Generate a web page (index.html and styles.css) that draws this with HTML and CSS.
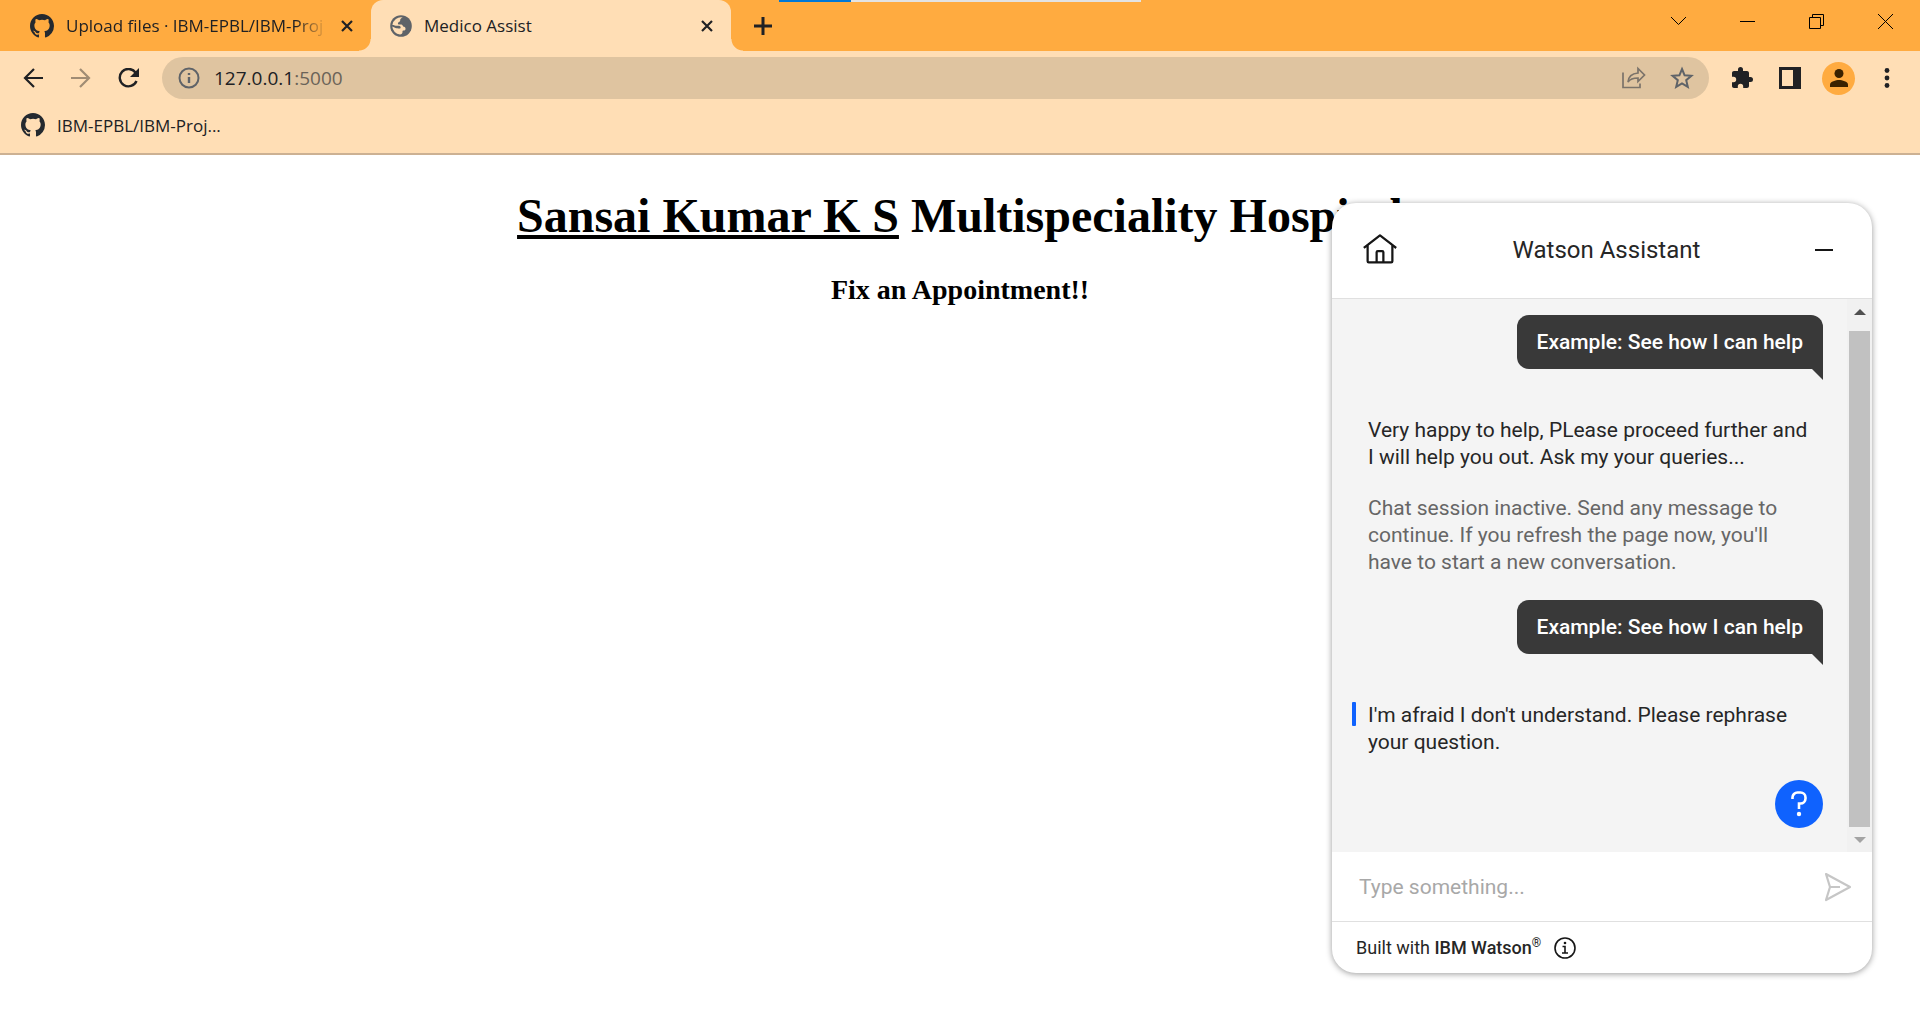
FILE: index.html
```html
<!DOCTYPE html>
<html lang="en">
<head>
<meta charset="utf-8">
<title>Medico Assist</title>
<link rel="stylesheet" href="styles.css">
</head>
<body>
<svg class="sprite" aria-hidden="true">
  <symbol id="github" viewBox="0 0 16 16"><path fill="#24292f" d="M8 0C3.58 0 0 3.58 0 8c0 3.54 2.29 6.53 5.47 7.59.4.07.55-.17.55-.38 0-.19-.01-.82-.01-1.49-2.01.37-2.53-.49-2.69-.94-.09-.23-.48-.94-.82-1.13-.28-.15-.68-.52-.01-.53.63-.01 1.08.58 1.23.82.72 1.21 1.87.87 2.33.66.07-.52.28-.87.51-1.07-1.78-.2-3.64-.89-3.64-3.95 0-.87.31-1.59.82-2.15-.08-.2-.36-1.02.08-2.12 0 0 .67-.21 2.2.82a7.6 7.6 0 0 1 4 0c1.53-1.04 2.2-.82 2.2-.82.44 1.1.16 1.92.08 2.12.51.56.82 1.27.82 2.15 0 3.07-1.87 3.75-3.65 3.95.29.25.54.73.54 1.48 0 1.07-.01 1.93-.01 2.2 0 .21.15.46.55.38A8.01 8.01 0 0 0 16 8c0-4.42-3.58-8-8-8z"/></symbol>
  <symbol id="cross" viewBox="0 0 12 12"><path d="M1 1l10 10M11 1L1 11" stroke="#202124" stroke-width="2.2" fill="none"/></symbol>
</svg>

<div class="window">
  <header class="browser">
    <div class="tabstrip">
      <div class="loading"><span></span></div>
      <div class="tab">
        <svg class="favicon" aria-hidden="true"><use href="#github"/></svg>
        <span class="tab-title tab-title-fade">Upload files · IBM-EPBL/IBM-Proj</span>
        <button class="close" aria-label="Close tab"><svg width="12" height="12"><use href="#cross"/></svg></button>
      </div>
      <div class="tab tab-active">
        <svg class="favicon globe" viewBox="0 0 22 22" aria-hidden="true"><circle cx="11" cy="11" r="10.800" fill="#5f6368"/><path fill="#ffdeb5" d="M12.800 2.400C11 3 10 4 10.200 5.500 10.400 7 8.500 6.800 8 8c-.4 1 .4 1.500 1.500 1.500h2c1.500.2 1 2.200 2.500 2.300 1 .1 1.500 1 1.500 2 0 1.500-.8 1.700-2.300 1.700-.8 0-.7 1-.7 1.800 0 1.200-1 2.200-2.500 2.200A8.600 8.600 0 0 1 2.300 11.500L5.500 13c1 .5 2.500.3 3.500.5 1.500.2 2-.8 1.500-1.800-.5-1.200-2-.9-3.500-.9-1.800 0-2.800-.8-4.600-.8A8.700 8.700 0 0 1 12.800 2.400z"/></svg>
        <span class="tab-title">Medico Assist</span>
        <button class="close" aria-label="Close tab"><svg width="12" height="12"><use href="#cross"/></svg></button>
      </div>
      <button class="newtab" aria-label="New tab"><svg width="18" height="18" viewBox="0 0 18 18"><path d="M9 0v18M0 9h18" stroke="#202124" stroke-width="3"/></svg></button>
      <div class="caption">
        <button aria-label="Search tabs"><svg width="15" height="15" viewBox="0 0 15 15"><path d="M0 3l7.500 7.500L15 3" fill="none" stroke="#000"/></svg></button>
        <button aria-label="Minimize"><svg width="15" height="15" viewBox="0 0 15 15"><path d="M0 7.500h15" stroke="#000"/></svg></button>
        <button aria-label="Restore"><svg width="15" height="15" viewBox="0 0 15 15"><path d="M.5 3.500h11v11H.5zM3.500 3.500v-3h11v11h-3" fill="none" stroke="#000"/></svg></button>
        <button aria-label="Close"><svg width="15" height="15" viewBox="0 0 15 15"><path d="M0 0l15 15M15 0L0 15" stroke="#000"/></svg></button>
      </div>
    </div>

    <div class="toolbar">
      <nav class="nav">
        <button aria-label="Back"><svg width="20" height="20" viewBox="0 0 20 20"><path d="M20 10H2M11 1l-9 9 9 9" fill="none" stroke="#202124" stroke-width="2.200"/></svg></button>
        <button aria-label="Forward"><svg width="20" height="20" viewBox="0 0 20 20"><path d="M0 10h18M9 1l9 9-9 9" fill="none" stroke="#a08c74" stroke-width="2.200"/></svg></button>
        <button aria-label="Reload"><svg width="22" height="20" viewBox="0 0 22 20"><path d="M17.500 4.500A8.700 8.700 0 1 0 18.500 13" fill="none" stroke="#202124" stroke-width="2.400"/><path d="M21 0v9h-9z" fill="#202124"/></svg></button>
      </nav>
      <div class="omnibox">
        <svg width="22" height="22" viewBox="0 0 22 22" aria-hidden="true"><circle cx="11" cy="11" r="9.500" fill="none" stroke="#5f6368" stroke-width="2"/><path d="M11 10v6M11 6v2" stroke="#5f6368" stroke-width="2.400"/></svg>
        <span class="url">127.0.0.1<span class="port">:5000</span></span>
        <button aria-label="Share"><svg width="24" height="24" viewBox="0 0 24 24"><path d="M1 6.500v15h17v-4M6 16c.5-6 4-8.500 10-9V2.500l6.500 6.500-6.500 6.500V12c-5 0-8 1-10 4z" fill="none" stroke="#7b736a" stroke-width="1.700"/></svg></button>
        <button aria-label="Bookmark"><svg width="24" height="24" viewBox="0 0 24 24"><path d="M12 3l2.600 6.300 6.800.5-5.200 4.400 1.600 6.600L12 17.300l-5.800 3.500 1.600-6.600-5.200-4.400 6.800-.5z" fill="none" stroke="#5f6368" stroke-width="2"/></svg></button>
      </div>
      <div class="actions">
        <button aria-label="Extensions"><svg width="24" height="24" viewBox="0 0 24 24"><path fill="#202124" d="M20.500 11H19V7c0-1.100-.9-2-2-2h-4V3.500a2.500 2.500 0 0 0-5 0V5H4c-1.100 0-2 .9-2 2v3.800h1.500a2.700 2.700 0 0 1 0 5.400H2V20c0 1.100.9 2 2 2h3.800v-1.500a2.700 2.700 0 0 1 5.400 0V22H17c1.100 0 2-.9 2-2v-4h1.500a2.500 2.500 0 0 0 0-5z"/></svg></button>
        <button aria-label="Side panel"><svg width="22" height="22" viewBox="0 0 22 22"><path fill="#202124" fill-rule="evenodd" d="M0 0h22v22H0zM3 3h11v16H3z"/></svg></button>
        <button class="avatar" aria-label="Profile"><svg width="20" height="20" viewBox="0 0 20 20"><circle cx="10" cy="5.500" r="4.500" fill="#3a2200"/><path d="M1 19v-2.500c0-3 6-4.500 9-4.500s9 1.500 9 4.500V19z" fill="#3a2200"/></svg></button>
        <button aria-label="Menu"><svg width="6" height="20" viewBox="0 0 6 20"><g fill="#202124"><circle cx="3" cy="2.500" r="2.400"/><circle cx="3" cy="10" r="2.400"/><circle cx="3" cy="17.500" r="2.400"/></g></svg></button>
      </div>
    </div>

    <div class="bookmarks">
      <a href="#"><svg class="favicon" aria-hidden="true"><use href="#github"/></svg>IBM-EPBL/IBM-Proj...</a>
    </div>
  </header>

  <main class="page">
    <h1><u>Sansai Kumar K S</u> Multispeciality Hospital</h1>
    <h3>Fix an Appointment!!</h3>
  </main>

  <section class="chat" aria-label="Watson Assistant">
    <div class="chat-head">
      <button aria-label="Home"><svg width="36" height="36" viewBox="0 0 32 32"><path fill="#161616" d="M16.612 2.214a1.010 1.010 0 0 0-1.242 0L1 13.419l1.243 1.572L4 13.621V26a2.004 2.004 0 0 0 2 2h20a2.004 2.004 0 0 0 2-2V13.630L29.757 15 31 13.428zM18 26h-4v-8h4zm2 0v-8a2.002 2.002 0 0 0-2-2h-4a2.002 2.002 0 0 0-2 2v8H6V12.062l10-7.790 10 7.800V26z"/></svg></button>
      <h2>Watson Assistant</h2>
      <button aria-label="Minimize chat"><svg width="18" height="18" viewBox="0 0 18 18"><path d="M0 9h18" stroke="#161616" stroke-width="2"/></svg></button>
    </div>
    <div class="chat-body">
      <div class="messages">
        <p class="sent">Example: See how I can help</p>
        <p class="reply">Very happy to help, PLease proceed further and<br>I will help you out. Ask my your queries...</p>
        <p class="notice">Chat session inactive. Send any message to<br>continue. If you refresh the page now, you'll<br>have to start a new conversation.</p>
        <p class="sent">Example: See how I can help</p>
        <p class="reply latest">I'm afraid I don't understand. Please rephrase<br>your question.</p>
        <button class="help" aria-label="Suggestions"><svg width="16" height="26" viewBox="0 0 16 26"><path d="M1.500 8V6.500a5 5 0 0 1 5-5h3a5 5 0 0 1 5 5v1a5 5 0 0 1-5 5H8V18" fill="none" stroke="#fff" stroke-width="2.600"/><circle cx="8" cy="23" r="2.200" fill="#fff"/></svg></button>
      </div>
      <div class="scrollbar" aria-hidden="true">
        <span class="arrow up"></span><span class="thumb"></span><span class="arrow down"></span>
      </div>
    </div>
    <form class="composer">
      <input type="text" placeholder="Type something..." aria-label="Type something">
      <button type="button" aria-label="Send"><svg width="28" height="30" viewBox="0 0 28 30"><path d="M2 2l24 13L2 28l4-13zM6 15h10" fill="none" stroke="#c6c6c6" stroke-width="2.200" stroke-linejoin="round"/></svg></button>
    </form>
    <footer class="credit">
      <span>Built with <b>IBM Watson</b><sup>®</sup></span>
      <button aria-label="About"><svg width="22" height="22" viewBox="0 0 22 22"><circle cx="11" cy="11" r="10" fill="none" stroke="#161616" stroke-width="1.600"/><path d="M8.500 9.500H11V16M8 16h6" fill="none" stroke="#161616" stroke-width="1.600"/><circle cx="11" cy="6" r="1.300" fill="#161616"/></svg></button>
    </footer>
  </section>
</div>
</body>
</html>
```
FILE: styles.css
```css
* { box-sizing: border-box; }
body { margin: 0; background: #fff; }
button { display: flex; align-items: center; justify-content: center; padding: 0; border: 0; background: none; color: inherit; }
svg { display: block; flex: none; }
.sprite { position: absolute; width: 0; height: 0; }
.window { position: relative; min-height: 100vh; overflow: hidden; }

.browser { font-family: "Open Sans", sans-serif; font-size: 17px; color: #202124; background: #ffdeb5; border-bottom: 2px solid #ccb193; }
.tabstrip { position: relative; display: flex; height: 51px; padding-left: 11px; background: #ffab40; }
.loading { position: absolute; top: 0; left: 779px; width: 362px; height: 2px; background: #e3e3e3; }
.loading span { display: block; width: 72px; height: 2px; background: #0078d7; }
.tab { display: flex; align-items: center; gap: 12px; width: 360px; padding: 0 16px 0 19px; }
.tab-active { position: relative; background: #ffdeb5; border-radius: 12px 12px 0 0; }
.tab-active::before, .tab-active::after { content: ""; position: absolute; bottom: 0; width: 12px; height: 12px; }
.tab-active::before { left: -12px; background: radial-gradient(circle at 0 0, #ffab40 11px, #ffdeb5 12px); }
.tab-active::after { right: -12px; background: radial-gradient(circle at 100% 0, #ffab40 11px, #ffdeb5 12px); }
.favicon { width: 24px; height: 24px; }
.globe { width: 22px; height: 22px; }
.tab-title { flex: 1; white-space: nowrap; overflow: hidden; }
.tab-title-fade { -webkit-mask-image: linear-gradient(to left, transparent, #000 32px); mask-image: linear-gradient(to left, transparent, #000 32px); }
.close { width: 16px; height: 16px; }
.newtab { width: 40px; margin-left: 12px; }
.caption { display: flex; margin-left: auto; height: 43px; }
.caption button { width: 69px; }

.toolbar { display: flex; align-items: center; height: 54px; }
.nav { display: flex; padding: 0 9px; }
.nav button { width: 48px; height: 42px; }
.omnibox { flex: 1; display: flex; align-items: center; gap: 14px; height: 42px; padding: 0 10px 0 16px; border-radius: 21px; background: #dfc4a0; }
.url { flex: 1; font-size: 19px; }
.port { color: #6b6358; }
.omnibox button { width: 34px; }
.actions { display: flex; align-items: center; padding: 0 9px; }
.actions button { width: 48px; height: 34px; }
.actions .avatar { width: 33px; height: 33px; margin: 0 8px; border-radius: 50%; background: #ffab40; }
.bookmarks { display: flex; align-items: center; height: 48px; padding: 0 21px 8px; }
.bookmarks a { display: flex; align-items: center; gap: 12px; color: inherit; text-decoration: none; }

.page { padding: 33px 12px; font-family: "Liberation Serif", serif; color: #000; text-align: center; }
h1 { margin: 0 0 30px; font-size: 48px; line-height: 56px; }
h3 { margin: 0; font-size: 28px; line-height: 32px; }

.chat { position: absolute; right: 48px; bottom: 41px; width: 540px; border-radius: 24px; overflow: hidden; background: #fff; box-shadow: 0 1px 6px rgba(0,0,0,.4); font-family: "Roboto", sans-serif; font-size: 21px; color: #262626; }
.chat-head { display: flex; align-items: center; justify-content: space-between; height: 96px; padding: 0 39px 2px 30px; border-bottom: 1px solid #e0e0e0; }
.chat-head h2 { margin: 0; font-size: 24px; font-weight: 400; }
.chat-body { display: flex; background: #f4f4f4; }
.messages { flex: 1; display: flex; flex-direction: column; gap: 24px; padding: 16px 24px 24px 36px; line-height: 27px; }
.messages p { margin: 0; white-space: nowrap; }
.messages .sent { position: relative; align-self: flex-end; height: 54px; padding: 14px 20px; margin-bottom: 24px; border-radius: 12px 12px 0 12px; background: #393939; color: #fff; font-weight: 500; }
.sent::after { content: ""; position: absolute; right: 0; top: 54px; border-top: 11px solid #393939; border-left: 11px solid transparent; }
.messages .notice { color: #666; }
.latest { position: relative; }
.latest::before { content: ""; position: absolute; left: -16px; top: 0; width: 4px; height: 24px; border-radius: 1px; background: #0f62fe; }
.help { align-self: flex-end; width: 48px; height: 48px; border-radius: 50%; background: #0f62fe; }
.scrollbar { display: flex; flex-direction: column; width: 25px; padding: 0 2px; background: #f1f1f1; }
.thumb { flex: 1; background: #c1c1c1; }
.arrow { display: flex; justify-content: center; height: 32px; padding-top: 10px; }
.down { height: 25px; }
.arrow::before { content: ""; height: 0; border: 6px solid transparent; }
.up::before { border-top: 0; border-bottom-color: #505050; }
.down::before { border-bottom: 0; border-top-color: #a3a3a3; }
.composer { display: flex; align-items: center; height: 70px; padding: 0 20px 0 27px; border-bottom: 1px solid #e0e0e0; }
.composer input { flex: 1; padding: 0; border: 0; outline: 0; font: inherit; }
.composer input::placeholder { color: #a8a8a8; opacity: 1; }
.credit { display: flex; align-items: center; gap: 13px; height: 51px; padding: 0 24px; font-size: 18px; }
.credit b { font-weight: 500; }
.credit sup { font-size: 12px; line-height: 12px; }
```
